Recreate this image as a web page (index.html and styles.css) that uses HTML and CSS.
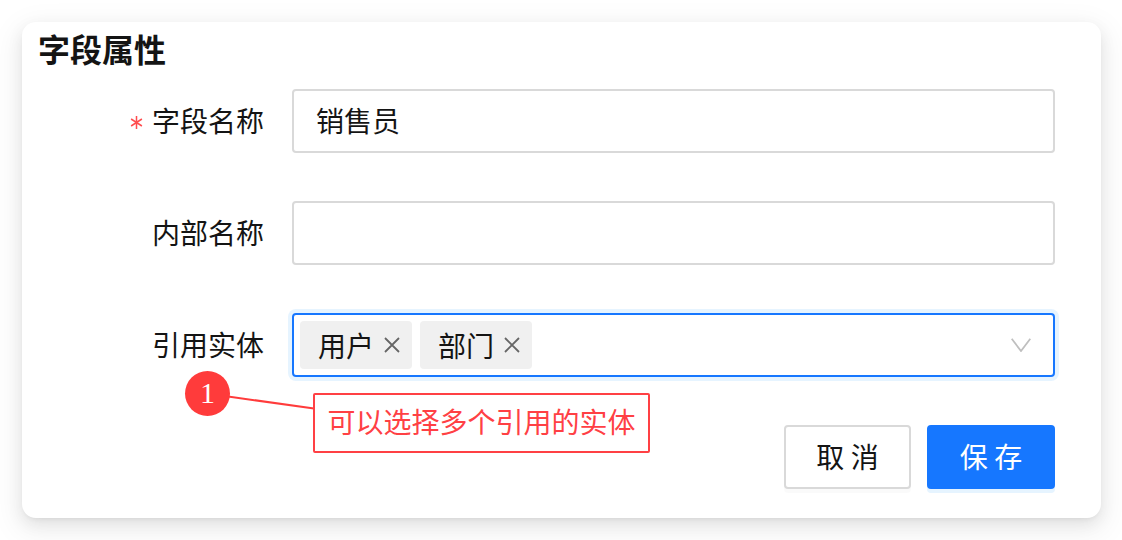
FILE: index.html
```html
<!DOCTYPE html>
<html lang="zh-CN">
<head>
    <meta charset="UTF-8">
    <meta name="viewport" content="width=device-width, initial-scale=1.0">
    <title>字段属性</title>
    <link rel="stylesheet" href="styles.css">
</head>
<body>

    <div class="card">
        <h1 class="card-title">字段属性</h1>

        <div class="form">
            <div class="row">
                <label class="label">
                    <svg class="required" viewBox="0 0 12 13"><path d="M6 0V13M0.6 3L11.4 10M11.4 3L0.6 10"/></svg>字段名称
                </label>
                <div class="input">销售员</div>
            </div>
            <div class="row">
                <label class="label">内部名称</label>
                <div class="input"></div>
            </div>
            <div class="row">
                <label class="label">引用实体</label>
                <div class="select">
                    <span class="tag">用户
                        <svg class="tag-x" viewBox="0 0 16 16"><path d="M1 1L15 15M15 1L1 15"/></svg>
                    </span>
                    <span class="tag">部门
                        <svg class="tag-x" viewBox="0 0 16 16"><path d="M1 1L15 15M15 1L1 15"/></svg>
                    </span>
                    <svg class="arrow" viewBox="0 0 20 14"><path d="M0.7 0.7L10 13L19.3 0.7"/></svg>
                </div>
            </div>
            <div class="actions">
                <button class="btn">取 消</button>
                <button class="btn btn-primary">保 存</button>
            </div>
        </div>

        <!-- annotation over the form -->
        <svg class="callout-line" viewBox="0 0 90 16"><path d="M0 1.5L86 13.5"/></svg>
        <div class="badge">1</div>
        <div class="callout">可以选择多个引用的实体</div>
    </div>

</body>
</html>
```

FILE: styles.css
```css
* {
    box-sizing: border-box;
}

body {
    margin: 0;
    padding: 22px 21px 22px 22px;
    background: #ffffff;
    font-family: "Noto Sans CJK SC", "Liberation Sans", sans-serif;
    color: #141414;
}

.card {
    position: relative;
    width: 1079px;
    height: 496px;
    padding: 4px 46px 0 16px;
    background: #ffffff;
    border-radius: 14px;
    box-shadow: 0 6px 16px rgba(0, 0, 0, .08), 0 3px 6px -4px rgba(0, 0, 0, .12), 0 9px 28px 8px rgba(0, 0, 0, .05);
}

.card-title {
    margin: 0;
    height: 44px;
    font-size: 32px;
    line-height: 44px;
    font-weight: 700;
}

.form {
    display: flex;
    flex-direction: column;
    gap: 48px;
    margin-top: 19px;
}

.row {
    display: flex;
    align-items: center;
    height: 64px;
}

.label {
    display: block;
    width: 226px;
    margin-right: 28px;
    margin-top: -2px;
    text-align: right;
    font-size: 28px;
    line-height: 40px;
}

.required {
    width: 13px;
    height: 13px;
    margin-right: 9px;
    vertical-align: 3px;
    fill: none;
    stroke: #ff4d4f;
    stroke-width: 1.5;
}

.input {
    flex: 1;
    height: 64px;
    padding: 0 22px;
    border: 2px solid #d9d9d9;
    border-radius: 4px;
    font-size: 28px;
    line-height: 58px;
}

.select {
    flex: 1;
    display: flex;
    align-items: center;
    gap: 8px;
    height: 64px;
    padding: 0 22px 0 6px;
    border: 2px solid #1677ff;
    border-radius: 4px;
    box-shadow: 0 0 0 4px #e6f4ff;
}

.tag {
    display: flex;
    align-items: center;
    justify-content: space-between;
    width: 112px;
    height: 48px;
    padding: 0 12px 0 18px;
    background: #f0f0f0;
    border-radius: 4px;
    font-size: 28px;
    line-height: 46px;
}

.tag-x {
    width: 16px;
    height: 16px;
    fill: none;
    stroke: #666666;
    stroke-width: 1.8;
}

.arrow {
    width: 20px;
    height: 14px;
    margin-left: auto;
    fill: none;
    stroke: #bfbfbf;
    stroke-width: 1.8;
}

.actions {
    display: flex;
    justify-content: flex-end;
    gap: 16px;
}

.btn {
    width: 127px;
    height: 64px;
    padding: 0 0 2px;
    background: #ffffff;
    border: 2px solid #d9d9d9;
    border-radius: 4px;
    box-shadow: 0 4px 0 rgba(0, 0, 0, .02);
    font-family: inherit;
    font-size: 28px;
    color: #141414;
}

.btn-primary {
    width: 128px;
    background: #1677ff;
    border-color: #1677ff;
    box-shadow: 0 4px 0 #e6f4ff;
    color: #ffffff;
}

.badge {
    position: absolute;
    left: 163px;
    top: 349px;
    width: 45px;
    height: 45px;
    border-radius: 50%;
    background: #ff3b3b;
    color: #ffffff;
    font-family: "Liberation Serif", serif;
    font-size: 30px;
    line-height: 43px;
    text-align: center;
}

.callout-line {
    position: absolute;
    left: 206px;
    top: 373px;
    width: 90px;
    height: 16px;
    fill: none;
    stroke: #ff3b3b;
    stroke-width: 2;
}

.callout {
    position: absolute;
    left: 291px;
    top: 371px;
    width: 337px;
    height: 60px;
    background: #ffffff;
    border: 2px solid #ff4044;
    border-radius: 2px;
    color: #ff4044;
    font-size: 28px;
    line-height: 52px;
    text-align: center;
}
```
